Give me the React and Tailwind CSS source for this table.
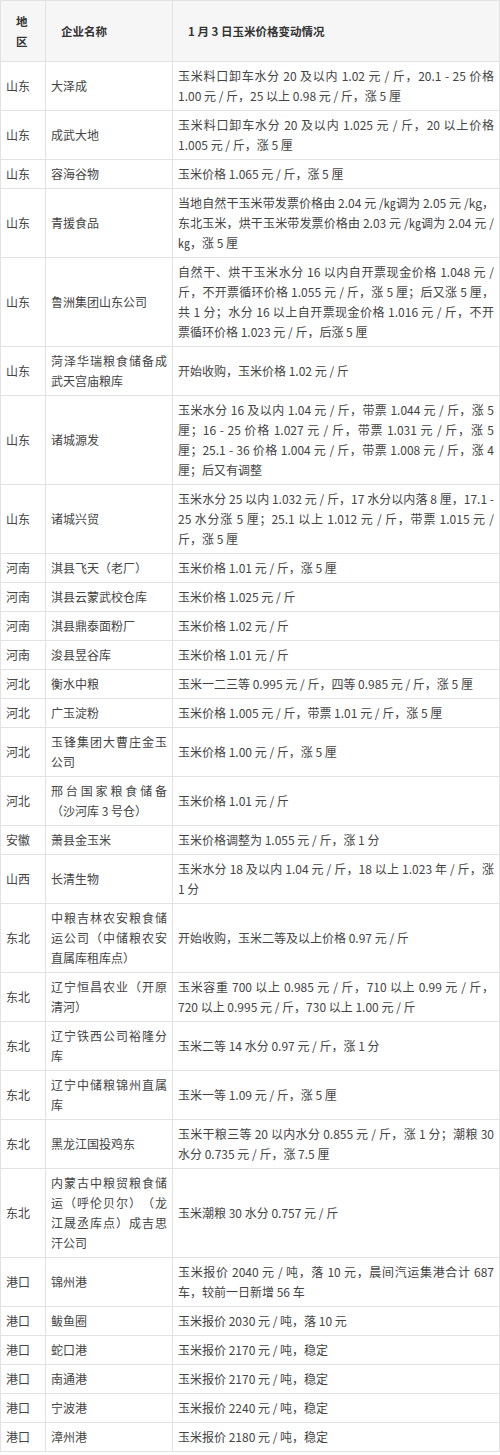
import React from 'react';

const rows = [
    ['山东', '大泽成', '玉米料口卸车水分 20 及以内 1.02 元 / 斤，20.1 - 25 价格 1.00 元 / 斤，25 以上 0.98 元 / 斤，涨 5 厘'],
    ['山东', '成武大地', '玉米料口卸车水分 20 及以内 1.025 元 / 斤，20 以上价格 1.005 元 / 斤，涨 5 厘'],
    ['山东', '容海谷物', '玉米价格 1.065 元 / 斤，涨 5 厘'],
    ['山东', '青援食品', '当地自然干玉米带发票价格由 2.04 元 /㎏调为 2.05 元 /kg，东北玉米，烘干玉米带发票价格由 2.03 元 /㎏调为 2.04 元 /㎏，涨 5 厘'],
    ['山东', '鲁洲集团山东公司', '自然干、烘干玉米水分 16 以内自开票现金价格 1.048 元 / 斤，不开票循环价格 1.055 元 / 斤，涨 5 厘；后又涨 5 厘，共 1 分；水分 16 以上自开票现金价格 1.016 元 / 斤，不开票循环价格 1.023 元 / 斤，后涨 5 厘'],
    ['山东', '菏泽华瑞粮食储备成武天宫庙粮库', '开始收购，玉米价格 1.02 元 / 斤'],
    ['山东', '诸城源发', '玉米水分 16 及以内 1.04 元 / 斤，带票 1.044 元 / 斤，涨 5 厘；16 - 25 价格 1.027 元 / 斤，带票 1.031 元 / 斤，涨 5 厘；25.1 - 36 价格 1.004 元 / 斤，带票 1.008 元 / 斤，涨 4 厘；后又有调整'],
    ['山东', '诸城兴贸', '玉米水分 25 以内 1.032 元 / 斤，17 水分以内落 8 厘，17.1 - 25 水分涨 5 厘；25.1 以上 1.012 元 / 斤，带票 1.015 元 / 斤，涨 5 厘'],
    ['河南', '淇县飞天（老厂）', '玉米价格 1.01 元 / 斤，涨 5 厘'],
    ['河南', '淇县云蒙武校仓库', '玉米价格 1.025 元 / 斤'],
    ['河南', '淇县鼎泰面粉厂', '玉米价格 1.02 元 / 斤'],
    ['河南', '浚县昱谷库', '玉米价格 1.01 元 / 斤'],
    ['河北', '衡水中粮', '玉米一二三等 0.995 元 / 斤，四等 0.985 元 / 斤，涨 5 厘'],
    ['河北', '广玉淀粉', '玉米价格 1.005 元 / 斤，带票 1.01 元 / 斤，涨 5 厘'],
    ['河北', '玉锋集团大曹庄金玉公司', '玉米价格 1.00 元 / 斤，涨 5 厘'],
    ['河北', '邢台国家粮食储备（沙河库 3 号仓）', '玉米价格 1.01 元 / 斤'],
    ['安徽', '萧县金玉米', '玉米价格调整为 1.055 元 / 斤，涨 1 分'],
    ['山西', '长清生物', '玉米水分 18 及以内 1.04 元 / 斤，18 以上 1.023 年 / 斤，涨 1 分'],
    ['东北', '中粮吉林农安粮食储运公司（中储粮农安直属库租库点）', '开始收购，玉米二等及以上价格 0.97 元 / 斤'],
    ['东北', '辽宁恒昌农业（开原清河）', '玉米容重 700 以上 0.985 元 / 斤，710 以上 0.99 元 / 斤，720 以上 0.995 元 / 斤，730 以上 1.00 元 / 斤'],
    ['东北', '辽宁铁西公司裕隆分库', '玉米二等 14 水分 0.97 元 / 斤，涨 1 分'],
    ['东北', '辽宁中储粮锦州直属库', '玉米一等 1.09 元 / 斤，涨 5 厘'],
    ['东北', '黑龙江国投鸡东', '玉米干粮三等 20 以内水分 0.855 元 / 斤，涨 1 分；潮粮 30 水分 0.735 元 / 斤，涨 7.5 厘'],
    ['东北', '内蒙古中粮贸粮食储运（呼伦贝尔）（龙江晟丞库点）成吉思汗公司', '玉米潮粮 30 水分 0.757 元 / 斤'],
    ['港口', '锦州港', '玉米报价 2040 元 / 吨，落 10 元，晨间汽运集港合计 687 车，较前一日新增 56 车'],
    ['港口', '鲅鱼圈', '玉米报价 2030 元 / 吨，落 10 元'],
    ['港口', '蛇口港', '玉米报价 2170 元 / 吨，稳定'],
    ['港口', '南通港', '玉米报价 2170 元 / 吨，稳定'],
    ['港口', '宁波港', '玉米报价 2240 元 / 吨，稳定'],
    ['港口', '漳州港', '玉米报价 2180 元 / 吨，稳定'],
];

const th = 'border border-[#e2e2e2] bg-[#f6f6f6] px-[15px] py-[10px] text-left align-middle font-bold text-[11.5px] leading-[20px] text-[#333]';
const td = 'border border-[#e2e2e2] px-[5px] py-[4px] align-middle text-justify text-[12px] leading-[20px] text-[#444]';

const App = () => {
    return (
        <div className="w-[500px] bg-white font-['Noto_Sans_CJK_SC',sans-serif] [text-spacing-trim:space-all]">
            <table className="w-[500px] table-fixed border-collapse">
                <colgroup>
                    <col className="w-[45px]" />
                    <col className="w-[127px]" />
                    <col />
                </colgroup>
                <thead>
                    <tr>
                        <th className={th}>地<br />区</th>
                        <th className={th}>企业名称</th>
                        <th className={th}>1 月 3 日玉米价格变动情况</th>
                    </tr>
                </thead>
                <tbody>
                    {rows.map(([area, name, info], i) => (
                        <tr key={i}>
                            <td className={td}>{area}</td>
                            <td className={td}>{name}</td>
                            <td className={td}>{info}</td>
                        </tr>
                    ))}
                </tbody>
            </table>
        </div>
    );
};

export default App;
